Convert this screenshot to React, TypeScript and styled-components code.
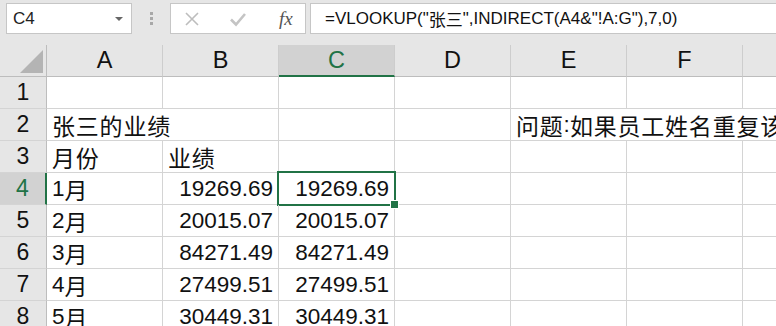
import styled, { createGlobalStyle, css } from "styled-components";

const GlobalStyle = createGlobalStyle`
  html, body {
    margin: 0;
    padding: 0;
    overflow: hidden;
    background: #e6e6e6;
  }
  * { box-sizing: border-box; }
`;

const GREEN = "#217346";
const LATIN = `"Liberation Sans", Arial, "Noto Sans CJK SC", sans-serif`;

const Page = styled.div`
  width: 776px;
  height: 326px;
  overflow: hidden;
  background: #e6e6e6;
  font-family: ${LATIN};
`;

const TopBar = styled.div`
  height: 45px;
  display: flex;
  align-items: flex-start;
  padding: 3px 0 0 6px;
`;

const NameBox = styled.div`
  width: 126px;
  height: 31px;
  background: #fff;
  border: 1px solid #c6c6c6;
  display: flex;
  align-items: center;
  justify-content: space-between;
  padding: 0 8px 0 6px;
  font-size: 17px;
  color: #222;
`;

const Caret = styled.span`
  width: 0;
  height: 0;
  border-left: 4px solid transparent;
  border-right: 4px solid transparent;
  border-top: 4px solid #666;
`;

const Grip = styled.div`
  width: 38px;
  height: 31px;
  display: flex;
  flex-direction: column;
  align-items: center;
  justify-content: center;
  gap: 2px;
  span {
    width: 3px;
    height: 3px;
    background: #a8a8a8;
  }
`;

const FxButtons = styled.div`
  width: 136px;
  height: 31px;
  background: #fff;
  border: 1px solid #c6c6c6;
  display: flex;
  align-items: center;
  padding: 0 0 0 13px;
  gap: 29px;
`;

const FxLabel = styled.span`
  font-family: "Liberation Serif", serif;
  font-style: italic;
  font-size: 19px;
  color: #555;
  margin-left: 3px;
`;

const FormulaInput = styled.div`
  flex: 1;
  height: 31px;
  margin-left: 4px;
  background: #fff;
  border: 1px solid #c6c6c6;
  border-right: none;
  display: flex;
  align-items: center;
  padding-left: 14px;
  font-size: 17px;
  color: #111;
  white-space: nowrap;
  font-family: ${LATIN};
`;

const Sheet = styled.div`
  display: grid;
  grid-template-columns: 47px repeat(7, 116px);
  grid-auto-rows: 32px;
  background: #fff;
`;

const Corner = styled.div`
  background: #e6e6e6;
  border-right: 1px solid #bdbdbd;
  border-bottom: 1px solid #bdbdbd;
  display: flex;
  align-items: flex-end;
  justify-content: flex-end;
  padding: 0 3px 3px 0;
`;

const CornerTriangle = styled.span`
  width: 0;
  height: 0;
  border-left: 23px solid transparent;
  border-bottom: 23px solid #b4b4b4;
`;

const ColHead = styled.div<{ $active?: boolean }>`
  background: ${({ $active }) => ($active ? "#d2d2d2" : "#e6e6e6")};
  border-right: 1px solid #cdcdcd;
  border-bottom: ${({ $active }) =>
    $active ? `2px solid ${GREEN}` : "1px solid #bdbdbd"};
  display: flex;
  align-items: center;
  justify-content: center;
  font-size: 23.5px;
  color: ${({ $active }) => ($active ? GREEN : "#111")};
  padding-top: ${({ $active }) => ($active ? "1px" : "0")};
`;

const RowHead = styled.div<{ $active?: boolean }>`
  background: ${({ $active }) => ($active ? "#d2d2d2" : "#e6e6e6")};
  border-right: ${({ $active }) =>
    $active ? `2px solid ${GREEN}` : "1px solid #bdbdbd"};
  border-bottom: 1px solid #d4d4d4;
  display: flex;
  align-items: center;
  justify-content: center;
  font-size: 23px;
  color: ${({ $active }) => ($active ? GREEN : "#111")};
`;

const Cell = styled.div<{
  $align?: "left" | "right";
  $span?: number;
  $selected?: boolean;
}>`
  position: relative;
  border-right: 1px solid #d4d4d4;
  border-bottom: 1px solid #d4d4d4;
  display: flex;
  align-items: center;
  justify-content: ${({ $align }) =>
    $align === "right" ? "flex-end" : "flex-start"};
  padding: 1px 5px 0 5px;
  font-size: 22.5px;
  color: #111;
  white-space: nowrap;
  overflow: visible;
  font-family: ${LATIN};
  ${({ $span }) => $span && css`grid-column: span ${$span};`}
  ${({ $selected }) =>
    $selected &&
    css`
      &::after {
        content: "";
        position: absolute;
        left: -2px;
        top: -2px;
        right: -2px;
        bottom: -2px;
        border: 2px solid ${GREEN};
        pointer-events: none;
      }
      &::before {
        content: "";
        position: absolute;
        right: -5px;
        bottom: -5px;
        width: 7px;
        height: 7px;
        background: ${GREEN};
        border: 1px solid #fff;
        z-index: 1;
      }
    `}
`;

const CJK = styled.span`
  font-family: "Noto Sans CJK SC", sans-serif;
  font-size: 23px;
  letter-spacing: 0.8px;
`;

const cols = ["A", "B", "C", "D", "E", "F", "G"];

type Row = {
  a?: string;
  b?: string;
  c?: string;
};

const data: Row[] = [
  {},
  {},
  { a: "月份", b: "业绩" },
  { a: "1月", b: "19269.69", c: "19269.69" },
  { a: "2月", b: "20015.07", c: "20015.07" },
  { a: "3月", b: "84271.49", c: "84271.49" },
  { a: "4月", b: "27499.51", c: "27499.51" },
  { a: "5月", b: "30449.31", c: "30449.31" },
];

const XIcon = () => (
  <svg width="16" height="16" viewBox="0 0 16 16">
    <path d="M2 2 L14 14 M14 2 L2 14" stroke="#bdbdbd" strokeWidth="1.6" />
  </svg>
);

const CheckIcon = () => (
  <svg width="18" height="16" viewBox="0 0 18 16">
    <path
      d="M2 8.5 L7 13.5 L16 3"
      stroke="#c4c4c4"
      strokeWidth="2.6"
      fill="none"
    />
  </svg>
);

const renderText = (t?: string) => {
  if (!t) return null;
  if (/^[\d.]+$/.test(t)) return t;
  // split latin digits from CJK characters
  return t.split(/([\u4e00-\u9fff]+)/).map((part, i) =>
    /[\u4e00-\u9fff]/.test(part) ? <CJK key={i}>{part}</CJK> : part
  );
};

export default function App() {
  return (
    <Page>
      <GlobalStyle />
      <TopBar>
        <NameBox>
          C4
          <Caret />
        </NameBox>
        <Grip>
          <span />
          <span />
          <span />
        </Grip>
        <FxButtons>
          <XIcon />
          <CheckIcon />
          <FxLabel>fx</FxLabel>
        </FxButtons>
        <FormulaInput>
          =VLOOKUP("<CJK style={{ fontSize: 17, letterSpacing: 0 }}>张三</CJK>",INDIRECT(A4&"!A:G"),7,0)
        </FormulaInput>
      </TopBar>
      <Sheet>
        <Corner>
          <CornerTriangle />
        </Corner>
        {cols.map((c) => (
          <ColHead key={c} $active={c === "C"}>
            {c}
          </ColHead>
        ))}
        {data.map((row, i) => {
          const n = i + 1;
          return [
            <RowHead key={`h${n}`} $active={n === 4}>
              {n}
            </RowHead>,
            ...(n === 2
              ? [
                  <Cell key="2a" $span={2}>
                    {renderText("张三的业绩")}
                  </Cell>,
                  <Cell key="2c" />,
                  <Cell key="2d" />,
                  <Cell key="2e" $span={3}>
                    {renderText("问题:如果员工姓名重复该")}
                  </Cell>,
                ]
              : [
                  <Cell key={`${n}a`}>{renderText(row.a)}</Cell>,
                  <Cell key={`${n}b`} $align={n === 3 ? "left" : "right"}>
                    {renderText(row.b)}
                  </Cell>,
                  <Cell key={`${n}c`} $align="right" $selected={n === 4}>
                    {renderText(row.c)}
                  </Cell>,
                  <Cell key={`${n}d`} />,
                  <Cell key={`${n}e`} />,
                  <Cell key={`${n}f`} />,
                  <Cell key={`${n}g`} />,
                ]),
          ];
        })}
      </Sheet>
    </Page>
  );
}
